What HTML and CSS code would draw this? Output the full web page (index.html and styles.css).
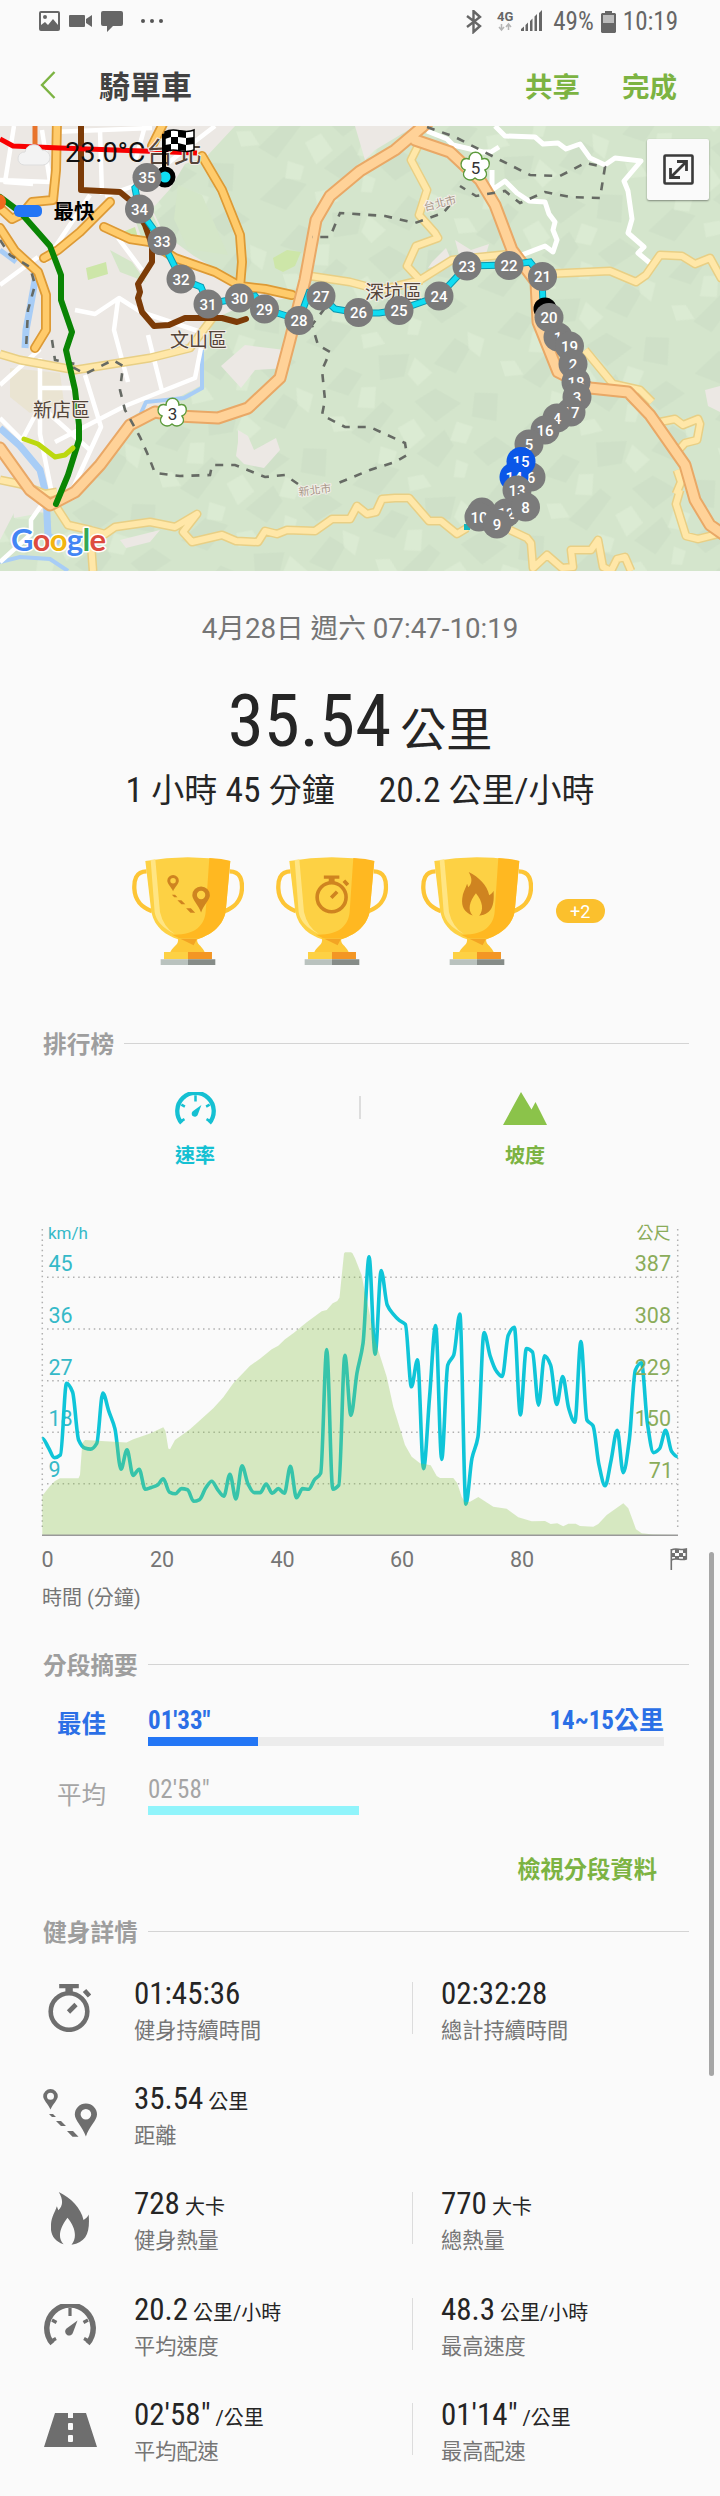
FILE: index.html
```html
<!DOCTYPE html>
<html lang="zh-Hant">
<head>
    <meta charset="utf-8">
    <title>騎單車</title>
    <link rel="stylesheet" href="styles.css">
</head>
<body>
    <!-- shared icons -->
    <svg class="defs" width="0" height="0">
        <symbol id="stopwatch" viewBox="0 0 43 48">
            <circle cx="21" cy="27.5" r="18.3" fill="none" stroke="currentColor" stroke-width="4.6"/>
            <path d="M11.2 0h19.6v4.2h-6v4.5h-7.4V4.2h-6.2z" fill="currentColor"/>
            <path d="M36.5 6.500l5 5.500M20.500 28l7.500-7.500" stroke="currentColor" stroke-width="4.6"/>
        </symbol>
        <symbol id="pins" viewBox="0 0 54 48">
            <path fill="currentColor" fill-rule="evenodd" d="M7.500 0a7.300 7.300 0 0 1 7.300 7.300C14.800 11 10 15 7.500 20.500 5 15 .2 11 .2 7.300A7.300 7.300 0 0 1 7.500 0zm0 3.800a3.500 3.500 0 1 0 0 7 3.500 3.500 0 0 0 0-7z"/>
            <path fill="currentColor" fill-rule="evenodd" d="M42.900 14.500A11 11 0 0 1 54 25.600C54 31.500 46 38 42.900 47.500 39.500 38 31.800 31.500 31.800 25.600a11 11 0 0 1 11.100-11.100zm0 5.500a5.300 5.300 0 1 0 0 10.600 5.300 5.300 0 0 0 0-10.600z"/>
            <path fill="currentColor" d="M6 25h4l3 3H9zM13 32h5l5 5h-5zM24 42h6l5.500 5.800h-6z"/>
        </symbol>
        <symbol id="flame" viewBox="0 0 38 53">
            <path fill="currentColor" d="M7.800 0C20 6 30 16 32.500 28c2.500-1.500 4.500-3.500 5.200-5.500C39 40 36 50 20.500 52.700 26 46 25 36 16.500 25.700 9 35 6 46 12.600 52.300 2 49-1 41 0 32c.5-7 4-12 5.900-17.700l1.400 4C12 14 12.500 8 7.800 0z"/>
        </symbol>
        <symbol id="gauge" viewBox="0 0 52 42">
            <path d="M8.500 39.500A23.200 23.200 0 1 1 43.500 39.500" fill="none" stroke="currentColor" stroke-width="5.500"/>
            <path d="M26 4v8M8 16l4.500 2.500M44 16l-4.500 2.500M7.500 37l4.500-2.500M44.500 37L40 34.500" stroke="currentColor" stroke-width="3.200"/>
            <path fill="currentColor" d="M33.500 16.500L29 28.500a4 4 0 1 1-6.500-4z"/>
        </symbol>
        <symbol id="trophy" viewBox="0 0 337 325">
            <path d="M44 43C10 43 6 72 7 95c2 40 25 57 53 68M293 43c34 0 38 29 37 52-2 40-25 57-53 68" fill="none" stroke="#fdc535" stroke-width="13"/>
            <path d="M40 12Q167-10 295 12L281 165c-10 48-50 70-85 82h-58c-35-12-70-34-80-82z" fill="#fdd144"/>
            <path d="M232 3q40 2 63 9l-14 153c-10 48-50 70-85 82h-48l-28-14c70 2 97-28 101-68z" fill="#ffb821"/>
            <path d="M56 9l14-2 14 158q10 45 45 67c-38-20-57-40-61-67z" fill="#ffe583"/>
            <path d="M138 243h58c-4 20 12 20 22 42H115c12-22 26-20 23-42z" fill="#fdc838"/>
            <path d="M145 245h50l-10 20z" fill="#f3a424"/>
            <path d="M96 285h72v22H96z" fill="#fdd144"/>
            <path d="M168 285h72v22h-72z" fill="#f39624"/>
            <path d="M86 307h82v17H86z" fill="#b9c2be"/>
            <path d="M168 307h82v17h-82z" fill="#868c88"/>
        </symbol>
    </svg>

    <div class="status">
        <svg class="status-left" width="126" height="24" viewBox="0 0 126 24">
            <path fill="#666" fill-rule="evenodd" d="M2 1h17a2 2 0 0 1 2 2v16a2 2 0 0 1-2 2H2a2 2 0 0 1-2-2V3a2 2 0 0 1 2-2zm0 2v12l4-3 3 3 5-6 5 6V3zm4 2a2 2 0 1 1 0 4 2 2 0 0 1 0-4z"/>
            <path fill="#666" d="M31 5h14a1 1 0 0 1 1 1v10a1 1 0 0 1-1 1H31a1 1 0 0 1-1-1V6a1 1 0 0 1 1-1zM47 9l6-4v12l-6-4zM64 1h18a2 2 0 0 1 2 2v11a2 2 0 0 1-2 2h-8l-6 6v-6h-4a2 2 0 0 1-2-2V3a2 2 0 0 1 2-2z"/>
            <circle cx="104" cy="11" r="2" fill="#555"/><circle cx="113" cy="11" r="2" fill="#555"/><circle cx="122" cy="11" r="2" fill="#555"/>
        </svg>
        <div class="status-right">
            <svg width="80" height="24" viewBox="0 0 80 24">
                <path d="M1 6l13 10-6.500 6V1L14 7 1 17" fill="none" stroke="#666" stroke-width="2.400"/>
                <text class="net" x="31" y="11">4G</text>
                <path d="M35.500 14v5M33 17l2.500 3 2.500-3M42.500 20v-5M40 17l2.500-3 2.500 3" fill="none" stroke="#b5b5b5" stroke-width="1.500"/>
                <path fill="#666" d="M55 21v-2l3-2.500V21zM59.500 21v-6l2.500-2.500V21zM64 21V11l2.500-2.500V21zM68.500 21V6.500L71 4v17zM73 21V3l3-3v21z"/>
            </svg>
            <span class="cond">49%</span>
            <svg width="15" height="22" viewBox="0 0 15 22">
                <path fill="#bbb" d="M0 3h15v10H0z"/>
                <path fill="#666" fill-rule="evenodd" d="M4 0h7v2h3l1 1v18l-1 1H1l-1-1V3l1-1h3zM2 4v8h11V4z"/>
            </svg>
            <span class="cond">10:19</span>
        </div>
    </div>

    <div class="appbar">
        <svg width="16" height="28" viewBox="0 0 16 28"><path d="M14.500 1L2 14l12.500 13" fill="none" stroke="#7cb342" stroke-width="2.400"/></svg>
        <h1>騎單車</h1>
        <a>共享</a>
        <a>完成</a>
    </div>

    <div class="map">
        <svg width="720" height="445" viewBox="0 126 720 445">
            <defs>
                <pattern id="hills" width="180" height="150" patternUnits="userSpaceOnUse" patternTransform="rotate(-18)">
                    <path fill="#c9dcc3" d="M10 20l25-14 14 12-20 16zM70 5l30 8-12 20-24-4zM120 30l28-18 12 14-22 20zM20 70l40-20 8 12-34 24zM90 60l24-6 20 22-30 10zM150 70l22 8-10 26-22-12zM5 120l30-14 20 14-28 18zM76 110l34-14 4 18-22 16zM130 126l26-8 14 18-30 8z" opacity=".5"/>
                    <path fill="#dfeed7" d="M44 30l14 4-8 20-16-6zM104 18l12 20-18 8-6-14zM162 10l14 12-10 16-8-12zM4 48l14 4 4 16-18-4zM66 80l18-4 6 20-20 8zM124 92l14 10-12 14-14-8zM44 92l14 10-8 12-14-6zM60 130l16 2 4 14-22-2zM112 128l10 8-8 12-10-4z" opacity=".6"/>
                </pattern>
                <g id="lanes">
                    <path d="M418 146l-7 14 16 30-8 25 16 18 3 5-22 8-9 20 13 14 32-20 58-6 34 20 66-3 26 11 10-7 14-20 22 1 13 8 15-6 11 20 15 1M422 280l-42 10-30-8-40-6"/>
                    <path d="M57 508l11 17 22 5 3 41M90 530l15 4 10-7 35-5 25 5 22-13-14 18 9 10 30-7 14 6 22 1 7-11 12 3 10-4 28 1 17-12h18l7-13 10 8 9-2 6-13 13-1 14 0 20 23h12l16 13 10-6M510 530l17 8 4 5 2 25 14-13 15 13 11-1-2-17 20 0 7-10 5 27 8 4 6-12 8-2 6 14"/>
                    <path d="M585 350l28 34 27 6 12 12M660 422l15-3 8 6 15-6 2 5-3 16-12 3-11 12M677 470l4 12-5 12M680 490l-4 14 10 32 12 3 24-6"/>
                    <path d="M0 354l20 6 55 10 75-12 40-10 24-32M0 480l20 4 25 10 12-2"/>
                </g>
                <path id="avenues" d="M57 120l-1 50-3 30-21 2-10 12-10 5-12-11M0 228l15 23 23 21 8 23v35l-11 18M110 202l-30 30-22 18-14 8M163 124l-11 22M104 227l26 12 20 3 25 16 40 14 25 14 25 3 27 6M202 156l20 34 18 45 2 27-2 24"/>
                <path id="freeways" d="M428 122l-33 28-35 21-30 25-14 24-11 60-15 60-10 38-32 30-30 10-40-2-23-4-25 13-30 40-25 27-25 13-20-15-30-42M415 140l35 12 30 28 15 25 17 45 24 32 2 40 20 50 32 16 38 4 22 23 35 50 10 35 15 25 20 14"/>
                <path id="ride" d="M165 177h-18l-12 11 4 21 23 32 19 38 20 8 7 17 32-6 15-2 10 13 34 11 10-27 12 3 14 13 24 4h20l20-3 40-14 28-30 42-1 21-3 12 15 1 28"/>
            </defs>
            <rect y="126" width="720" height="445" fill="#d4e5cc"/>
            <rect y="126" width="720" height="445" fill="url(#hills)"/>

            <!-- city -->
            <path fill="#ece8e4" d="M0 126h235l-28 30-22 8-15 25-18 20 12 25 30 22 44 26 50 16-46 8-30 14-8 30-4 36-30 16-34 12-30 40-30 45-30 14-30-4L0 540z"/>
            <path fill="#ece8e4" d="M355 126h60l-40 24-10 10zM245 345l40 5 2 18-32 2-14 18-20-22zM238 430l10 6 6 14 22-12 4 12-16 18-20-4-8-8 2-14zM705 390l15-4v26l-12-6zM432 262l14-14 6 14-24 6zM455 240l16 10 18-6-4 14-24 4zM12 500l28-10-4 24-22 4zM120 540l40-10-10 12-24 6z"/>
            <path fill="#d4e6c8" d="M130 205l22 8 14 30-22 2zM110 250l22 12 14 20-26-10zM178 185l24 10 26 60-40-6-14-30z"/>
            <path fill="#cde6a8" d="M273 258l14-8 14 2-6 14-12 6-8-4zM86 268l20-6 2 12-20 6zM115 235l20-8 4 14z"/>
            <path fill="#eae4d2" d="M10 368l50 5 4 30-34 10-20-16z"/>

            <!-- water -->
            <g fill="none" stroke="#a8cdf6">
                <path stroke-width="7" d="M0 428l20 18 20 24 6 24 2 42 12 6"/>
                <path stroke-width="4" d="M0 562l20-5 30 2 18 12M202 350v38l-18 10-38 4-10 22"/>
                <path stroke-width="7" d="M36 275l-5 28-5 27-1 18"/>
                <path stroke-width="5" d="M0 250l16 12"/>
            </g>

            <!-- minor roads -->
            <g fill="none" stroke="#fff" stroke-width="4.500" stroke-linejoin="round">
                <path d="M14 126L5 182l28 2M42 130l8 52-50-2M100 130l2 65M52 132l100-4M215 126l-26 20-44 36-40 14M145 126l-10 36M0 285l38-28M90 195L45 262M118 238l24 32M75 310l20 4 24-16 22 14 60 20M118 300l-4 30 14 52M148 335l14 56M40 358v76l12 60M40 388h35M0 385l40-36M85 375l16 52-32 70M55 442l70-36 70-28 6-30M45 410l45 40M0 418l22 22 18-34M45 500l-14 20v14L0 562"/>
            </g>
            <path fill="none" stroke="#fff" stroke-width="5" stroke-linejoin="round" d="M427 131l20 8 6 6 30 7 8 0 8-5M495 126l10 10 30 1 8 7 15-1 8 6 14-5 10 14 15 7 10-7 26 3-17 20 4 10 4 28-4 14 16 14-6 6 12 10M492 190l13-9 12 12 12 8 16 1 4 12 6 8-2 8 4 10-4 12-8-6-26 10M492 170v26"/>

            <g fill="none" stroke-linejoin="round">
                <use href="#lanes" stroke="#e8cf85" stroke-width="9"/>
                <use href="#lanes" stroke="#ffe7a8" stroke-width="6"/>
            </g>
            <g fill="none" stroke-linejoin="round" stroke-linecap="round">
                <use href="#avenues" stroke="#dd9a35" stroke-width="10"/>
                <use href="#avenues" stroke="#ffcb6b" stroke-width="6.500"/>
                <use href="#freeways" stroke="#e9a866" stroke-width="13"/>
                <use href="#freeways" stroke="#ffd298" stroke-width="9"/>
            </g>

            <!-- district borders -->
            <g fill="none" stroke="#666a64" stroke-width="2.600" stroke-dasharray="8 8">
                <path d="M427 127l28 10 45 23 30 15 30 1 25-13 20 4-5 31-30-1-25-5-25 11-15-12-29 5-16-10M450 205l-7 8-28 10-30-7-45-3-10 24-18 0M325 308l-13 17 6 20 12 7-8 18 3 30-3 15 23 12 25 0 15 7 20 9 2 12-12 7-25 8-34 14M298 484l-13-9-20 2-30-12-23 0-2 10-30 1-25-3-7-18-8-18-15-27-5-20 3-24-10-6-28 14-18-10M52 340l3 20 25 5M0 240l10 15 20 12 5 18-7 25-2 40"/>
            </g>

            <!-- metro lines -->
            <g fill="none" stroke-width="6" stroke-linejoin="round">
                <path stroke="#e8742c" stroke-width="5" d="M35 126v22"/>
                <path stroke="#7c3b07" d="M81 126v64l39 2 12 10 13 23 7 20v17l-14 22 2 8-2 6 4 14 12 14 15-1 16-7 37 0 15 4 9-3" stroke-linecap="round"/>
                <path stroke="#0a8504" d="M0 197l20 15 30 34 11 29v25l11 32-6 18 9 40 4 35v15l-11 35-12 29" stroke-linecap="round"/>
                <path stroke="#bcd80e" stroke-width="5" stroke-linecap="round" d="M24 439l14 5 17 13 10-2 8-7"/>
                <path stroke="#f80000" stroke-width="5" d="M0 139l13 7 47 2 137 5"/>
            </g>
            <circle cx="-2" cy="202" r="8" fill="#f26a1e"/>

            <!-- place names -->
            <g class="place">
                <text x="146" y="163" font-size="28">台北</text>
                <text x="170" y="347" font-size="19">文山區</text>
                <text x="365" y="299" font-size="19">深坑區</text>
                <text x="33" y="417" font-size="19">新店區</text>
                <text class="faint" transform="translate(425 211) rotate(-14)" font-size="11">台北市</text>
                <text class="faint" transform="translate(299 496) rotate(-7)" font-size="11">新北市</text>
            </g>

            <!-- highway shields -->
            <g fill="#fff" stroke="#5c9a3c" stroke-width="1.500">
                <path id="shield" d="M469 159c0-9 13-9 13 0 8-3 10 8 3 11 5 7-4 13-10 8-6 5-15-1-10-8-7-3-4-14 4-11z"/>
                <use href="#shield" x="-303" y="246"/>
            </g>
            <g class="shield-no">
                <text x="475.500" y="174">5</text>
                <text x="172.500" y="420">3</text>
            </g>

            <!-- ride -->
            <g fill="none">
                <use href="#ride" stroke="#0a98b0" stroke-width="7"/>
                <use href="#ride" stroke="#10dcf2" stroke-width="5"/>
            </g>
            <rect x="464" y="524" width="6" height="6" fill="#12b5bd"/>
            <circle cx="165" cy="177" r="8" fill="#10dcf2" stroke="#000" stroke-width="5"/>
            <circle cx="545" cy="309" r="11.500"/>
            <g id="markers" class="markers"></g>

            <!-- finish flag -->
            <path d="M162 134l4-1v38h-4z"/>
            <path fill="#fff" stroke="#000" stroke-width="1.500" d="M165 132c10-6 18 3 29-2v20c-11 5-19-4-29 2z"/>
            <path d="M165 132l6-2v7l-6 2zM178 130l8 1v7l-8-1zM171 137l7 0v7l-7 0zM186 138l8-1v7l-8 1zM165 145l6-1v6l-6 2zM178 143l8 2v6l-8-1z"/>

            <path fill="#f3f3f3" stroke="#ddd" d="M24 165a6.500 6.500 0 0 1 1-13 9 9 0 0 1 17-2 7.500 7.500 0 0 1 1 15z"/>
            <text class="temp" x="65" y="162">23.0°C</text>
            <rect x="14" y="205" width="28" height="12" rx="5" fill="#2376f5"/>
            <text class="fastest" x="53.500" y="219">最快</text>

            <text class="google" x="11" y="551" textLength="95"><tspan fill="#4285f4">G</tspan><tspan fill="#dd4b3e">o</tspan><tspan fill="#f2b50f">o</tspan><tspan fill="#4285f4">g</tspan><tspan fill="#34a853">l</tspan><tspan fill="#dd4b3e">e</tspan></text>
        </svg>
        <button class="expand">
            <svg width="31" height="31" viewBox="0 0 31 31">
                <rect x="1.500" y="1.500" width="28" height="28" rx="1" fill="none" stroke="#3a3a3a" stroke-width="2.600"/>
                <path d="M8 23L23 8M14 7.500h9.500V17M7.500 14v9.500H17" fill="none" stroke="#3a3a3a" stroke-width="2.800"/>
            </svg>
        </button>
    </div>

    <div class="summary">
        <p class="date">4月28日 週六 07:47-10:19</p>
        <p class="distance"><span class="cond">35.54</span><small>公里</small></p>
        <p class="totals">
            <span><b class="cond">1</b> 小時 <b class="cond">45</b> 分鐘</span>
            <span><b class="cond">20.2</b> 公里/小時</span>
        </p>
        <div class="trophies">
            <div class="trophy"><svg class="cup"><use href="#trophy"/></svg><svg class="mark pins"><use href="#pins"/></svg></div>
            <div class="trophy"><svg class="cup"><use href="#trophy"/></svg><svg class="mark watch"><use href="#stopwatch"/></svg></div>
            <div class="trophy"><svg class="cup"><use href="#trophy"/></svg><svg class="mark fire"><use href="#flame"/></svg></div>
            <span class="more">+2</span>
        </div>
    </div>

    <h2>排行榜</h2>
    <div class="tabs">
        <div class="tab speed">
            <svg width="41" height="33"><use href="#gauge"/></svg>
            <span>速率</span>
        </div>
        <div class="tab-divider"></div>
        <div class="tab slope">
            <svg width="44" height="33" viewBox="0 0 44 33"><path fill="#8bc34a" d="M0 33L18 0l10.500 17.500L32.500 10 44 33z"/></svg>
            <span>坡度</span>
        </div>
    </div>

    <svg class="chart" width="720" height="405" viewBox="0 0 720 405">
        <g class="grid">
            <path d="M42.300 19v301M677.700 19v301"/>
            <path d="M47 67.300h630M47 119h630M47 170.700h630M47 222.300h630M47 273.700h630"/>
        </g>
        <g class="speed-labels">
            <text class="unit" x="48" y="29">km/h</text>
            <text x="48.500" y="61">45</text>
            <text x="48.500" y="113">36</text>
            <text x="48.500" y="164.500">27</text>
            <text x="48.500" y="216">18</text>
            <text x="48.500" y="267">9</text>
        </g>
        <path id="speed-line"/>
        <g class="height-labels">
            <text class="unit" x="670.500" y="29">公尺</text>
            <text x="671" y="61">387</text>
            <text x="671" y="113">308</text>
            <text x="671" y="164.500">229</text>
            <text x="671" y="216">150</text>
            <text x="673" y="268">71</text>
        </g>
        <path class="height" d="M42.300 325V285.700L50 276l5-5 5-2.700h18.500L80 265l2.300-32L85 230l41.500 2.600 6.800-3.300 16.700-5.800 13.300-6.200 2.200 3.700 2.800 17.500 1.700.8L175 230l15-10.700 23.300-21 10-11 10-14L250 155.700l10-7 11.700-9.400 6.600-3.600 6.700-6.400 8.300-6 13.400-11 15-11L326.700 100l6-6.700 4.600-2.300 2.200-3.500L344 43.500l1-1.200h6l1.500 1L355 48.300l6.700 17L365 83l3.300 14 6.700 33 11.700 36.700 6.600 30L405 235l6.700 11.700 8.300 6.600 10.700 2L436.700 266l3.300 2h13.300l4 5.300 4.400 13.400 3.300 5.600 5-.6 8.300-4.700 15 9.700 13.400 2 11.600 8.600 13.400 4 13.300-.3 5.700 3 6.600-.7 6 3 5-2.600h7.400l4.300 2.300 13.300.7 5-2.700 8.400-9 16.600-11.700 5 5 5 13.400 2.700 7.600 5.700 4 11.600 1.200 24.400.5z"/>
        <path class="base" d="M42 325.300h636"/>
        <g class="minutes">
            <text x="47.500" y="356.500">0</text>
            <text x="162" y="356.500">20</text>
            <text x="282.500" y="356.500">40</text>
            <text x="402" y="356.500">60</text>
            <text x="522" y="356.500">80</text>
            <text class="axis" x="42" y="395">時間 (分鐘)</text>
        </g>
        <g fill="none" stroke="#707070" stroke-width="1.600">
            <path d="M671.300 339v21M671.300 340c5-3 9 1 15-1v10c-6 2-10-2-15 1z"/>
            <path fill="#707070" stroke="none" d="M675 339h4v4h-4zM683 340h3v3h-3zM679 343h4v4h-4zM672 343h3v4h-3zM675 346h4v3h-4zM683 346h3v3h-3z"/>
        </g>
    </svg>

    <h2 class="h-splits">分段摘要</h2>
    <div class="split best">
        <span class="split-name">最佳</span>
        <div class="split-body">
            <p><span class="cond">01'33"</span><span><span class="cond">14~15</span>公里</span></p>
            <div class="bar"><i style="width:21.3%"></i></div>
        </div>
    </div>
    <div class="split avg">
        <span class="split-name">平均</span>
        <div class="split-body">
            <p><span class="cond">02'58"</span></p>
            <div class="bar"><i style="width:40.9%"></i></div>
        </div>
    </div>
    <a class="view-splits">檢視分段資料</a>

    <h2 class="h-details">健身詳情</h2>
    <div class="details">
        <div class="row">
            <svg class="ico watch"><use href="#stopwatch"/></svg>
            <div class="cell"><p><b class="cond">01:45:36</b></p><span>健身持續時間</span></div>
            <div class="cell second"><p><b class="cond">02:32:28</b></p><span>總計持續時間</span></div>
        </div>
        <div class="row">
            <svg class="ico pins"><use href="#pins"/></svg>
            <div class="cell"><p><b class="cond">35.54</b> 公里</p><span>距離</span></div>
        </div>
        <div class="row">
            <svg class="ico fire"><use href="#flame"/></svg>
            <div class="cell"><p><b class="cond">728</b> 大卡</p><span>健身熱量</span></div>
            <div class="cell second"><p><b class="cond">770</b> 大卡</p><span>總熱量</span></div>
        </div>
        <div class="row">
            <svg class="ico speedo"><use href="#gauge"/></svg>
            <div class="cell"><p><b class="cond">20.2</b> 公里/小時</p><span>平均速度</span></div>
            <div class="cell second"><p><b class="cond">48.3</b> 公里/小時</p><span>最高速度</span></div>
        </div>
        <div class="row">
            <svg class="ico road" viewBox="0 0 53 34"><path fill="currentColor" fill-rule="evenodd" d="M11 0h31l11 34H0zM24 0v5h5V0zM25 10a1 1 0 0 0-1 1v5a1 1 0 0 0 1 1h3a1 1 0 0 0 1-1v-5a1 1 0 0 0-1-1zM25 22a1 1 0 0 0-1 1v5a1 1 0 0 0 1 1h3a1 1 0 0 0 1-1v-5a1 1 0 0 0-1-1z"/></svg>
            <div class="cell"><p><b class="cond">02'58"</b> /公里</p><span>平均配速</span></div>
            <div class="cell second"><p><b class="cond">01'14"</b> /公里</p><span>最高配速</span></div>
        </div>
    </div>

    <div class="scrollbar"></div>
    <script src="ride.js"></script>
</body>
</html>
```
FILE: styles.css
```css
body {
    position: relative;
    width: 720px;
    height: 2496px;
    margin: 0;
    overflow: hidden;
    background: #fafafa;
    color: #252525;
    font-family: Roboto, "Noto Sans CJK TC", sans-serif;
}

h1, h2, p {
    margin: 0;
}

svg {
    display: block;
}

.defs {
    position: absolute;
}

.cond {
    font-stretch: 85%;
    font-weight: inherit;
}

/* status bar */
.status {
    display: flex;
    justify-content: space-between;
    height: 43px;
    padding: 0 42px 0 39px;
    box-sizing: border-box;
    align-items: center;
}

.status-right {
    display: flex;
    align-items: center;
    gap: 7px;
    color: #666;
    font-size: 25px;
}

.net {
    font-size: 13px;
    font-weight: 700;
    fill: #666;
}

.appbar {
    display: flex;
    align-items: center;
    height: 83px;
    padding: 0 43px 0 40px;
}

.appbar h1 {
    flex: 1;
    margin-left: 43px;
    font-size: 31px;
    font-weight: 700;
    color: #424242;
}

.appbar a {
    margin-left: 42px;
    font-size: 27.500px;
    font-weight: 700;
    color: #7cb342;
}

/* map */
.map {
    position: relative;
    height: 445px;
}

.place text {
    fill: #54453a;
    stroke: #f2eee8;
    stroke-width: 2px;
    paint-order: stroke;
}

.place .faint {
    fill: #a89888;
}

.shield-no {
    font-size: 17px;
    text-anchor: middle;
    fill: #333;
}

.markers circle {
    fill: #7b7b7b;
}

.markers .fast {
    fill: #0b57e8;
}

.markers text {
    font-size: 15px;
    font-weight: 500;
    text-anchor: middle;
    fill: #fff;
}

.temp {
    font-size: 27px;
    fill: #111;
}

.fastest {
    font-size: 20.500px;
    font-weight: 700;
}

.google {
    font-family: Lato, sans-serif;
    font-size: 31px;
    font-weight: 700;
    stroke: #fff;
    stroke-width: 3px;
    stroke-linejoin: round;
    paint-order: stroke;
}

.expand {
    position: absolute;
    top: 13px;
    right: 11px;
    width: 62px;
    height: 61px;
    padding: 0 0 0 16px;
    border: 0;
    border-radius: 2px;
    background: #fafafa;
    box-shadow: 0 1px 2px rgba(0, 0, 0, .4);
}

/* summary */
.date {
    padding-top: 38px;
    font-size: 27.700px;
    line-height: 40px;
    text-align: center;
    color: #757575;
}

.distance {
    margin-top: 27px;
    font-size: 73px;
    line-height: 90px;
    text-align: center;
}

.distance small {
    margin-left: 9px;
    font-size: 46px;
    line-height: 1;
}

.totals {
    display: flex;
    justify-content: center;
    gap: 44px;
    font-size: 33px;
    line-height: 50px;
}

.totals b {
    font-size: 35.500px;
    line-height: 1;
    font-weight: 400;
}

.trophies {
    display: flex;
    height: 110px;
    margin-top: 41px;
    padding-left: 131.700px;
}

.trophy {
    position: relative;
    width: 112.300px;
    margin-right: 32.400px;
}

.cup {
    width: 112.300px;
    height: 108.300px;
}

.mark {
    position: absolute;
    color: #cf8420;
}

.mark.pins {
    top: 18px;
    left: 35px;
    width: 43px;
    height: 38px;
}

.mark.watch {
    top: 18px;
    left: 39px;
    width: 34px;
    height: 39px;
}

.mark.fire {
    top: 15px;
    left: 38px;
    width: 38px;
    height: 44px;
}

.more {
    width: 49px;
    height: 24px;
    margin: 42px 0 0 -10px;
    border-radius: 12px;
    background: #fbc02d;
    color: #fff;
    font-size: 18px;
    line-height: 25px;
    text-align: center;
}

/* section headings */
h2 {
    display: flex;
    align-items: center;
    margin: 60px 31px 0 43px;
    font-size: 23.700px;
    font-weight: 700;
    line-height: 36px;
    color: #9e9e9e;
}

h2::after {
    content: "";
    flex: 1;
    height: 1px;
    margin: 0 0 3px 10px;
    background: #d4d4d4;
}

.h-splits {
    margin-top: 33px;
}

.h-details {
    margin-top: 28px;
}

.tabs {
    display: flex;
    padding: 29px 30px 0;
}

.tab {
    flex: 1;
    display: flex;
    flex-direction: column;
    align-items: center;
    gap: 17px;
    font-size: 20px;
    font-weight: 700;
    line-height: 28px;
}

.tab-divider {
    width: 2px;
    height: 23px;
    margin: 4px -1px 0;
    background: #ddd;
}

.speed {
    color: #15c0d2;
}

.slope {
    color: #7cb342;
}

/* chart */
.chart {
    margin-top: 40px;
}

.chart text {
    font-size: 21.500px;
}

.chart .unit {
    font-size: 17px;
}

.grid path {
    fill: none;
    stroke: #b0b0b0;
    stroke-width: 1.500px;
    stroke-dasharray: 1.500 3.700;
}

.speed-labels {
    fill: #35b9c8;
}

.height-labels {
    fill: #8aac5a;
    text-anchor: end;
}

#speed-line {
    fill: none;
    stroke: #0fc5d8;
    stroke-width: 3.600px;
    stroke-linejoin: round;
}

.height {
    fill: #8bc34a;
    fill-opacity: .32;
}

.base {
    stroke: #999;
    stroke-width: 1.500px;
}

.minutes {
    fill: #757575;
    text-anchor: middle;
}

.chart .axis {
    font-size: 20px;
    text-anchor: start;
}

/* splits */
.split {
    display: flex;
    margin: 22px 56px 0 57px;
    font-size: 25px;
    line-height: 30px;
}

.split-name {
    width: 91px;
    font-size: 24.500px;
    line-height: 38px;
}

.split-body {
    flex: 1;
}

.split p {
    display: flex;
    justify-content: space-between;
}

.bar {
    height: 9px;
    margin-top: 1px;
}

.bar i {
    display: block;
    height: 100%;
}

.best {
    font-weight: 700;
    color: #2b6fe6;
}

.best .bar {
    background: #ececec;
}

.best .bar i {
    background: #2376f5;
}

.avg {
    margin-top: 29px;
    color: #a5a5a5;
}

.avg .split-name {
    line-height: 41px;
}

.avg .bar i {
    background: #90f4fb;
}

.view-splits {
    display: block;
    margin: 35px 63px 0 0;
    font-size: 23.300px;
    font-weight: 700;
    line-height: 38px;
    height: 36px;
    text-align: right;
    color: #7cb342;
}

/* workout details */
.details {
    display: flex;
    flex-direction: column;
    gap: 34px;
    margin-top: 23px;
    padding-left: 40px;
}

.row {
    display: grid;
    grid-template-columns: 94px 278px 1fr;
    height: 71.200px;
}

.ico {
    color: #6e6e6e;
}

.ico.watch {
    width: 43px;
    height: 48px;
    margin: 10px 0 0 8px;
}

.ico.pins {
    width: 54px;
    height: 48px;
    margin: 10px 0 0 3px;
}

.ico.fire {
    width: 38px;
    height: 53px;
    margin: 8px 0 0 11px;
}

.ico.speedo {
    width: 52px;
    height: 42px;
    margin: 14px 0 0 4px;
}

.ico.road {
    width: 53px;
    height: 34px;
    margin: 18px 0 0 4px;
}

.cell p {
    font-size: 20px;
    line-height: 40px;
}

.cell b {
    font-size: 31px;
    font-weight: 400;
}

.cell > span {
    display: block;
    margin-top: -1px;
    font-size: 21.200px;
    line-height: 30px;
    color: #757575;
}

.second {
    padding-left: 29px;
    background: linear-gradient(#dcdcdc, #dcdcdc) 0 8px / 1px 52px no-repeat;
}

.scrollbar {
    position: absolute;
    top: 1552px;
    right: 6px;
    width: 5px;
    height: 524px;
    border-radius: 3px;
    background: #a6a6a6;
}
```
FILE: ride.js
```js
const SVG = 'http://www.w3.org/2000/svg';

// kilometre markers, later ones cover earlier ones
const markers = [
    [1, 558, 337], [19, 569.5, 346], [2, 573, 364], [18, 576, 382], [3, 577, 397],
    [17, 571, 412], [4, 557, 418], [16, 545, 430], [5, 529, 444], [6, 531, 477],
    [15, 521, 461.5], [14, 514, 477], [13, 517, 490], [12, 506, 513], [8, 525.5, 507],
    [11, 482, 512], [10, 479, 517], [9, 497, 524],
    [20, 549, 317.5], [21, 542.5, 276.5], [22, 509, 265.5], [23, 467, 266], [24, 439, 296],
    [25, 399, 310.5], [26, 358.5, 312.5], [27, 321, 296], [28, 299, 320.5], [29, 264.5, 309],
    [30, 239.5, 298], [31, 208, 304], [32, 181, 279], [33, 162, 241], [34, 139.5, 209], [35, 147, 177.5]
];

const layer = document.getElementById('markers');
for (const [km, x, y] of markers) {
    const dot = document.createElementNS(SVG, 'circle');
    dot.setAttribute('cx', x);
    dot.setAttribute('cy', y);
    dot.setAttribute('r', 14.5);
    if (km === 14 || km === 15) dot.setAttribute('class', 'fast');
    layer.appendChild(dot);
    if (km === 11) continue;
    const label = document.createElementNS(SVG, 'text');
    label.setAttribute('x', x);
    label.setAttribute('y', y + 5.5);
    label.textContent = km;
    layer.appendChild(label);
}

// km/h, one value per minute
const speed = [
    16.9, 15.3, 13.5, 14.0, 26.5, 25.0, 16.6, 15.2, 15.0, 16.0, 24.8, 21.6, 18.6, 11.5, 14.9,
    10.4, 11.5, 8.0, 8.3, 8.7, 9.8, 7.5, 7.2, 8.1, 7.9, 5.9, 6.2, 8.2, 9.4, 7.9,
    6.8, 10.6, 6.3, 12.1, 8.9, 7.4, 7.4, 8.9, 7.3, 8.1, 7.3, 12.0, 6.5, 8.1, 8.0,
    9.7, 10.8, 32.4, 8.0, 8.7, 31.4, 20.9, 28.3, 33.5, 48.6, 31.6, 46.2, 40.2, 38.6, 37.5,
    36.8, 25.9, 30.6, 11.6, 24.2, 36.6, 13.2, 29.7, 31.5, 38.6, 5.4, 13.4, 17.2, 35.4, 31.3,
    28.7, 27.7, 34.9, 36.3, 21.0, 32.6, 32.0, 22.7, 31.3, 29.7, 22.8, 27.7, 22.1, 19.7, 33.8,
    20.1, 19.1, 12.2, 8.6, 13.1, 18.3, 10.9, 16.6, 28.8, 30.1, 19.5, 14.4, 15.1, 18.3, 14.6, 13.7
];

const step = (677.7 - 42.3) / (speed.length - 1);
const px = i => 42.3 + i * step;
const py = i => 325 - speed[i] * 5.722;

// flat tangents at peaks, harmonic mean elsewhere
function slope(i) {
    if (i === 0 || i === speed.length - 1) return 0;
    const a = py(i) - py(i - 1);
    const b = py(i + 1) - py(i);
    return a * b <= 0 ? 0 : 2 * a * b / (a + b);
}

let d = `M${px(0)} ${py(0)}`;
for (let i = 1; i < speed.length; i++) {
    d += `C${px(i - 1) + step / 3} ${py(i - 1) + slope(i - 1) / 3} ${px(i) - step / 3} ${py(i) - slope(i) / 3} ${px(i)} ${py(i)}`;
}
document.getElementById('speed-line').setAttribute('d', d);
```
